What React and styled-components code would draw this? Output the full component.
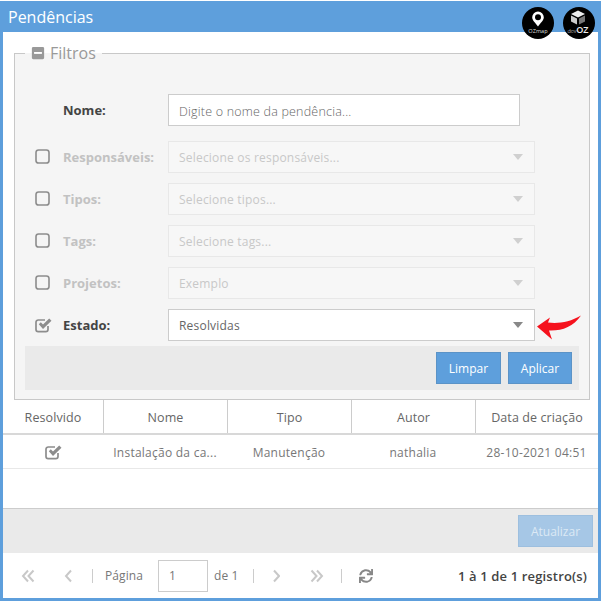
import React from "react";
import styled, { createGlobalStyle } from "styled-components";
import { FaMinusSquare, FaSync } from "react-icons/fa";

const GlobalStyle = createGlobalStyle`
  html, body {
    margin: 0;
    padding: 0;
    background: #fff;
    overflow: hidden;
  }
  * { box-sizing: border-box; }
`;

const filters = [
  { label: "Responsáveis:", text: "Selecione os responsáveis..." },
  { label: "Tipos:", text: "Selecione tipos..." },
  { label: "Tags:", text: "Selecione tags..." },
  { label: "Projetos:", text: "Exemplo" },
];

const columns = ["Resolvido", "Nome", "Tipo", "Autor", "Data de criação"];

const Check = ({ checked }) => (
  <CheckIcon viewBox="0 0 17 16" width="17" height="16">
    {checked ? (
      <>
        <path d="M13 9v3.400a2.200 2.200 0 0 1-2.200 2.200H3.200A2.200 2.200 0 0 1 1 12.400V5.200A2.200 2.200 0 0 1 3.200 3H10" fill="none" stroke="#8d8d8d" strokeWidth="1.700" />
        <path d="M3.800 7.200L5.800 5.300 8 7.600 14.200 1.400 16.500 3.700 8 12z" fill="#8d8d8d" />
      </>
    ) : (
      <rect x="1" y="1" width="13" height="13" rx="2.600" fill="none" stroke="#8d8d8d" strokeWidth="1.600" />
    )}
  </CheckIcon>
);

const Chevron = ({ d }) => (
  <svg viewBox="0 0 14 14" width="14" height="14">
    <path d={d} fill="none" stroke="#c8c8c8" strokeWidth="2" />
  </svg>
);

const App = () => {
  return (
    <>
      <GlobalStyle />
      <Frame>
        <Header>
          <Title>Pendências</Title>
          <Badge>
            <svg viewBox="0 0 32 32" width="32" height="32">
              <circle cx="16" cy="16" r="16" fill="#000" />
              <path d="M16 4.500a5.800 5.800 0 0 0-5.800 5.800c0 3.400 3.300 5.600 5.800 9.200 2.500-3.600 5.800-5.800 5.800-9.200A5.800 5.800 0 0 0 16 4.500z" fill="#fff" />
              <circle cx="16" cy="10.300" r="3" fill="#000" />
              <text x="16" y="26" fontSize="5.600" textAnchor="middle" fill="#ddd" fontFamily="Open Sans">OZmap</text>
            </svg>
          </Badge>
          <Badge>
            <svg viewBox="0 0 32 32" width="32" height="32">
              <circle cx="16" cy="16" r="16" fill="#000" />
              <path d="M8 7l7-3.500 7 3.500-7 3.500z" fill="#eee" />
              <path d="M8 8.500l6 3v6l-6-3z" fill="#ccc" />
              <path d="M16 11.500l6-3v6l-6 3z" fill="#777" />
              <text x="15" y="25.500" textAnchor="middle" fill="#eee" fontFamily="Open Sans">
                <tspan fontSize="5.500" fontWeight="300">dev</tspan>
                <tspan fontSize="9" fontWeight="600">OZ</tspan>
              </text>
            </svg>
          </Badge>
        </Header>
        <Body>
          <Fieldset>
            <Legend>
              <FaMinusSquare size={14} />
              <span>Filtros</span>
            </Legend>
            <NameRow>
              <Label>Nome:</Label>
              <NameInput placeholder="Digite o nome da pendência..." />
            </NameRow>
            {filters.map((f) => (
              <FilterRow key={f.label}>
                <CheckSlot><Check /></CheckSlot>
                <Label $off>{f.label}</Label>
                <Select $off>
                  {f.text}
                  <Caret $off />
                </Select>
              </FilterRow>
            ))}
            <FilterRow>
              <CheckSlot><Check checked /></CheckSlot>
              <Label>Estado:</Label>
              <Select>
                Resolvidas
                <Caret />
              </Select>
              <Arrow viewBox="0 0 46 26" width="46" height="26">
                <path d="M1 11.500L14 2.500 12 7.500C22 9 34 7 45 0.500 37 12 26 16 13 15.500L16 24.500z" fill="#f5121d" />
              </Arrow>
            </FilterRow>
            <ActionBar>
              <Button $w={65}>Limpar</Button>
              <Button $w={64}>Aplicar</Button>
            </ActionBar>
          </Fieldset>
          <Grid>
            {columns.map((c) => (
              <HeadCell key={c}>{c}</HeadCell>
            ))}
          </Grid>
          <RowGrid>
            <Cell><Check checked /></Cell>
            <Cell>Instalação da ca...</Cell>
            <Cell>Manutenção</Cell>
            <Cell>nathalia</Cell>
            <Cell>28-10-2021 04:51</Cell>
          </RowGrid>
          <Spacer />
          <UpdateBar>
            <UpdateButton>Atualizar</UpdateButton>
          </UpdateBar>
          <Pager>
            <PagerIcon $w={40}><Chevron d="M7 1.500L2 7l5 5.500M12.500 1.500L7.500 7l5 5.500" /></PagerIcon>
            <PagerIcon $w={31}><Chevron d="M10 1.500L5 7l5 5.500" /></PagerIcon>
            <Divider />
            <PagerText>Página</PagerText>
            <PageInput value="1" readOnly />
            <PagerText $gap={14}>de 1</PagerText>
            <Divider />
            <PagerIcon $w={44}><Chevron d="M8 1.500L13 7l-5 5.500" /></PagerIcon>
            <PagerIcon $w={31}><Chevron d="M1.500 1.500L6.500 7l-5 5.500M7 1.500L12 7l-5 5.500" /></PagerIcon>
            <Divider />
            <RefreshIcon><FaSync size={14} /></RefreshIcon>
            <Total>1 à 1 de 1 registro(s)</Total>
          </Pager>
        </Body>
      </Frame>
    </>
  );
};
export default App;

const Frame = styled.div`
  width: 601px;
  height: 600px;
  margin-top: 1px;
  border: 3px solid #5e9fdc;
  border-top: 0;
  display: flex;
  flex-direction: column;
  font-family: "Open Sans", sans-serif;
  color: #666;
  background: #fff;
`;
const Header = styled.div`
  height: 31px;
  flex: none;
  margin: 0 -3px;
  padding: 0 6px 0 8px;
  background: #5e9fdc;
  display: flex;
  gap: 9px;
`;
const Title = styled.div`
  flex: 1;
  color: #fff;
  font-size: 16px;
  line-height: 33px;
`;
const Badge = styled.div`
  width: 32px;
  height: 32px;
  margin-top: 6px;
  position: relative;
  z-index: 2;
`;
const Body = styled.div`
  flex: 1;
  display: flex;
  flex-direction: column;
  min-height: 0;
`;
const Fieldset = styled.fieldset`
  margin: 10px 8px 0 11px;
  padding: 30px 10px 10px 10px;
  border: 1px solid #c8c8c8;
  background: #f5f5f5;
  min-width: 0;
  height: 358px;
`;
const Legend = styled.legend`
  margin-left: 0;
  padding: 0 6px;
  height: 22px;
  display: flex;
  align-items: center;
  gap: 5px;
  font-size: 16px;
  line-height: 22px;
  color: #999;
`;
const NameRow = styled.div`
  display: flex;
  align-items: center;
  height: 32px;
  padding-left: 38px;
  margin-bottom: 15px;
`;
const FilterRow = styled.div`
  position: relative;
  display: flex;
  align-items: center;
  height: 32px;
  margin-bottom: 10px;
  &:nth-last-child(2) {
    margin-bottom: 5px;
  }
`;
const CheckSlot = styled.div`
  width: 38px;
  display: flex;
  padding-left: 10px;
`;
const CheckIcon = styled.svg`
  display: block;
  overflow: visible;
`;
const Label = styled.div`
  width: 105px;
  font-size: 13px;
  font-weight: 700;
  color: ${(p) => (p.$off ? "#c2c2c2" : "#444")};
  white-space: nowrap;
`;
const NameInput = styled.input`
  width: 352px;
  height: 32px;
  padding: 2px 10px 0;
  border: 1px solid #ccc;
  background: #fff;
  font: 300 12.500px "Open Sans", sans-serif;
  letter-spacing: 0.2px;
  outline: none;
  &::placeholder {
    color: #666;
    opacity: 1;
  }
`;
const Select = styled.div`
  position: relative;
  width: 367px;
  height: 32px;
  padding: 1px 10px 0;
  display: flex;
  align-items: center;
  font-size: 12px;
  letter-spacing: 0.2px;
  background: ${(p) => (p.$off ? "#f7f7f7" : "#fff")};
  border: 1px solid ${(p) => (p.$off ? "#e8e8e8" : "#ccc")};
  color: ${(p) => (p.$off ? "#c8c8c8" : "#666")};
`;
const Caret = styled.span`
  position: absolute;
  right: 11px;
  top: 12px;
  border-left: 5px solid transparent;
  border-right: 5px solid transparent;
  border-top: 6px solid ${(p) => (p.$off ? "#d0d0d0" : "#888")};
`;
const Arrow = styled.svg`
  position: absolute;
  left: 511px;
  top: 6px;
`;
const ActionBar = styled.div`
  height: 44px;
  background: #eaeaea;
  display: flex;
  justify-content: flex-end;
  align-items: center;
  gap: 7px;
  padding-right: 7px;
`;
const Button = styled.div`
  width: ${(p) => p.$w}px;
  height: 32px;
  background: #5e9fdc;
  border: 1px solid #5b93c7;
  color: #fff;
  font-size: 12px;
  display: flex;
  align-items: center;
  justify-content: center;
`;
const Grid = styled.div`
  flex: none;
  height: 35px;
  display: grid;
  grid-template-columns: 100px 124px 124px 124px 1fr;
  border-bottom: 2px solid #d8d8d8;
`;
const HeadCell = styled.div`
  display: flex;
  align-items: center;
  justify-content: center;
  padding-top: 1px;
  font-size: 12.500px;
  letter-spacing: 0.1px;
  color: #666;
  & + & {
    border-left: 1px solid #ccc;
  }
`;
const RowGrid = styled.div`
  flex: none;
  height: 34px;
  display: grid;
  grid-template-columns: 100px 124px 124px 124px 1fr;
  border-bottom: 1px solid #e8e8e8;
`;
const Cell = styled.div`
  display: flex;
  align-items: center;
  justify-content: center;
  padding-top: 1px;
  font-size: 12px;
  letter-spacing: 0.25px;
  color: #777;
  white-space: nowrap;
`;
const Spacer = styled.div`
  flex: 1;
`;
const UpdateBar = styled.div`
  flex: none;
  height: 45px;
  background: #eaeaea;
  border-top: 1px solid #ccc;
  display: flex;
  justify-content: flex-end;
  align-items: center;
  padding-right: 5px;
`;
const UpdateButton = styled.div`
  width: 75px;
  height: 32px;
  background: #a6c7e6;
  border: 1px solid #9dbfdf;
  color: #dce9f5;
  font-size: 12px;
  display: flex;
  align-items: center;
  justify-content: center;
`;
const Pager = styled.div`
  flex: none;
  height: 45px;
  display: flex;
  align-items: center;
  padding: 0 11px 0 18px;
  font-size: 12px;
  color: #777;
`;
const PagerIcon = styled.div`
  width: ${(p) => p.$w}px;
  display: flex;
  svg { display: block; }
`;
const Divider = styled.div`
  width: 1px;
  height: 14px;
  background: #ccc;
  margin-right: 12px;
`;
const PagerText = styled.div`
  margin-right: ${(p) => p.$gap || 15}px;
  letter-spacing: 0.1px;
`;
const PageInput = styled.input`
  width: 50px;
  height: 32px;
  margin-right: 6px;
  padding: 0 10px;
  border: 1px solid #ccc;
  font: 12px "Open Sans", sans-serif;
  color: #777;
  outline: none;
`;
const RefreshIcon = styled.div`
  margin-left: 5px;
  color: #888;
  display: flex;
`;
const Total = styled.div`
  margin-left: auto;
  font-size: 13px;
  font-weight: 600;
  letter-spacing: 0.15px;
  color: #444;
`;
